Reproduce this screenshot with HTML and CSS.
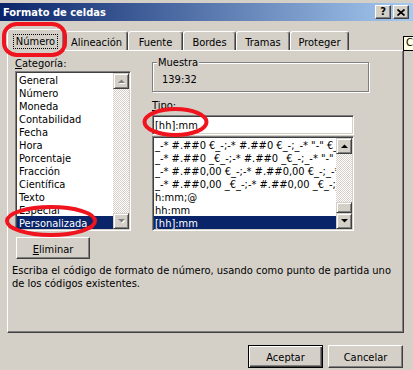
FILE: index.html
```html
<!DOCTYPE html>
<html lang="es">
<head>
<meta charset="utf-8">
<title>Formato de celdas</title>
<link rel="stylesheet" href="styles.css">
</head>
<body>
<div class="window">
  <header class="titlebar">
    <span class="title">Formato de celdas</span>
    <div class="caption-btns">
      <span class="cbtn help">?</span>
      <span class="cbtn close"><svg width="8" height="7" viewBox="0 0 8 7"><path d="M0.5 0.5 L7.5 6.5 M7.5 0.5 L0.5 6.5" stroke="#000" stroke-width="1.7" fill="none"/></svg></span>
    </div>
  </header>
  <nav class="tabs">
    <div class="tab active"><span class="focus">Número</span></div>
    <div class="tab t-alin">Alineación</div>
    <div class="tab t-fuen">Fuente</div>
    <div class="tab t-bord">Bordes</div>
    <div class="tab t-tram">Tramas</div>
    <div class="tab t-prot">Proteger</div>
  </nav>
  <section class="panel">
    <div class="cols">
      <div class="col-left">
        <div class="label"><u>C</u>ategoría:</div>
        <div class="listbox cat">
          <div class="rows">
            <div class="row">General</div>
            <div class="row">Número</div>
            <div class="row">Moneda</div>
            <div class="row">Contabilidad</div>
            <div class="row">Fecha</div>
            <div class="row">Hora</div>
            <div class="row">Porcentaje</div>
            <div class="row">Fracción</div>
            <div class="row">Científica</div>
            <div class="row">Texto</div>
            <div class="row">Especial</div>
            <div class="row sel">Personalizada</div>
          </div>
          <div class="vscroll">
            <div class="sbtn"><svg width="7" height="5" viewBox="0 0 7 5"><polygon points="1,5 8,5 4.5,1.5" fill="#fff"/><polygon points="0,4 7,4 3.5,0.5" fill="#808080"/></svg></div>
            <div class="track"></div>
            <div class="sbtn"><svg width="7" height="5" viewBox="0 0 7 5"><polygon points="1,1 8,1 4.5,4.5" fill="#fff"/><polygon points="0,0 7,0 3.5,3.5" fill="#808080"/></svg></div>
          </div>
        </div>
        <button class="btn elim"><u>E</u>liminar</button>
      </div>
      <div class="col-right">
        <fieldset class="group">
          <legend>Muestra</legend>
          <div class="sample">139:32</div>
        </fieldset>
        <div class="label tipo-label"><u>T</u>ipo:</div>
        <div class="textbox">[hh]:mm</div>
        <div class="listbox tipo">
          <div class="rows">
            <div class="row">_-* #.##0 €_-;-* #.##0 €_-;_-* "-" €_-;_-@_-</div>
            <div class="row">_-* #.##0 _€_-;-* #.##0 _€_-;_-* "-" _€_-;_-@_-</div>
            <div class="row">_-* #.##0,00 €_-;-* #.##0,00 €_-;_-* "-"?? €_-;_-@_-</div>
            <div class="row">_-* #.##0,00 _€_-;-* #.##0,00 _€_-;_-* "-"?? _€_-;_-@_-</div>
            <div class="row">h:mm;@</div>
            <div class="row">hh:mm</div>
            <div class="row sel">[hh]:mm</div>
          </div>
          <div class="vscroll">
            <div class="sbtn"><svg width="7" height="4" viewBox="0 0 7 4"><polygon points="0,4 7,4 3.5,0.5" fill="#000"/></svg></div>
            <div class="track"></div>
            <div class="sbtn thumb"></div>
            <div class="sbtn"><svg width="7" height="4" viewBox="0 0 7 4"><polygon points="0,0 7,0 3.5,3.5" fill="#000"/></svg></div>
          </div>
        </div>
      </div>
    </div>
    <p class="desc">Escriba el código de formato de número, usando como punto de partida uno<br>de los códigos existentes.</p>
  </section>
  <footer class="actions">
    <button class="btn default">Aceptar</button>
    <button class="btn">Cancelar</button>
  </footer>
</div>
<div class="tooltip">C</div>
<svg class="annotations" width="413" height="370" viewBox="0 0 413 370">
  <rect x="4" y="24" width="61" height="31" rx="13" ry="12" fill="none" stroke="#f0141e" stroke-width="4"/>
  <ellipse cx="175.5" cy="122" rx="31" ry="13" fill="none" stroke="#f0141e" stroke-width="4"/>
  <ellipse cx="51" cy="221" rx="44" ry="14" fill="none" stroke="#f0141e" stroke-width="4"/>
</svg>
</body>
</html>
```

FILE: styles.css
```css
* { box-sizing: border-box; }
html, body { margin: 0; padding: 0; }
body {
  width: 413px;
  height: 370px;
  overflow: hidden;
  position: relative;
  background: #d4d0c8;
  font-family: "DejaVu Sans Condensed", "Liberation Sans", sans-serif;
  font-size: 11px;
  line-height: 13px;
  color: #000;
}
.window { padding-top: 3px; }

.titlebar {
  height: 18px;
  display: flex;
  align-items: center;
  justify-content: space-between;
  padding: 0 4px 0 3px;
  background: linear-gradient(to right, #0a246a, #a6caf0);
  color: #fff;
  font-weight: bold;
}
.title { padding-top: 1px; }
.caption-btns { display: flex; gap: 2px; }
.cbtn {
  width: 16px;
  height: 14px;
  background: #d4d0c8;
  border: 1px solid;
  border-color: #fff #404040 #404040 #fff;
  box-shadow: inset -1px -1px #808080;
  display: flex;
  align-items: center;
  justify-content: center;
  color: #000;
  font-weight: bold;
  line-height: 12px;
}

.tabs {
  height: 29px;
  display: flex;
  align-items: flex-end;
  padding-left: 7px;
}
.tab {
  height: 19px;
  border: 1px solid;
  border-bottom: 0;
  border-color: #fff #404040 transparent #fff;
  border-radius: 3px 3px 0 0;
  box-shadow: inset -1px 0 #808080;
  text-align: center;
  padding-top: 4px;
  white-space: nowrap;
}
.tab.active {
  width: 57px;
  height: 23px;
  margin-bottom: -2px;
  position: relative;
  z-index: 1;
  background: #d4d0c8;
  padding-top: 4px;
}
.focus {
  display: inline-block;
  border: 1px dotted #000;
  padding: 0 2px;
}
.t-alin { width: 63px; margin-left: 1px; }
.t-fuen { width: 55px; }
.t-bord { width: 53px; }
.t-tram { width: 54px; }
.t-prot { width: 59px; }

.panel {
  margin-left: 7px;
  width: 397px;
  height: 283px;
  border: 1px solid;
  border-color: #fff #404040 #404040 #fff;
  box-shadow: inset -1px -1px #808080;
  padding: 6px 0 0 7px;
}
.cols { display: flex; }
.col-left { width: 116px; }
.col-right { margin-left: 21px; width: 217px; }
.label { height: 14px; }
.label u, .btn u { text-decoration: underline; text-underline-offset: 1px; }

.listbox {
  background: #fff;
  border: 1px solid;
  border-color: #808080 #fff #fff #808080;
  box-shadow: inset 1px 1px #404040, inset -1px -1px #d4d0c8;
  padding: 1px;
  display: flex;
}
.cat { width: 116px; height: 160px; }
.tipo { width: 202px; height: 95px; margin-top: 1px; }
.rows { flex: 1; min-width: 0; overflow: hidden; }
.row {
  height: 13px;
  line-height: 15px;
  padding-left: 2px;
  white-space: nowrap;
}
.tipo .row { padding-left: 1px; }
.row.sel { background: #0a246a; color: #fff; }

.vscroll { width: 16px; flex: none; display: flex; flex-direction: column; }
.sbtn {
  height: 16px;
  flex: none;
  background: #d4d0c8;
  border: 1px solid;
  border-color: #d4d0c8 #404040 #404040 #d4d0c8;
  box-shadow: inset 1px 1px #fff, inset -1px -1px #808080;
  display: flex;
  align-items: center;
  justify-content: center;
}
.sbtn svg { display: block; }
.thumb { height: 11px; }
.track {
  flex: 1;
  background: repeating-conic-gradient(#fff 0 25%, #d4d0c8 0 50%) 0 0 / 2px 2px;
}

.group {
  margin: -1px 0 0;
  width: 217px;
  padding: 4px 9px 5px;
  border: 1px solid #808080;
  box-shadow: 1px 1px 0 #fff, inset 1px 1px 0 #fff;
  min-inline-size: 0;
}
.group legend {
  margin-left: -5px;
  padding: 0 1px;
  background: #d4d0c8;
  line-height: 13px;
}
.sample { height: 13px; }
.tipo-label { margin-top: 7px; height: 16px; }
.textbox {
  width: 202px;
  height: 20px;
  background: #fff;
  border: 1px solid;
  border-color: #808080 #fff #fff #808080;
  box-shadow: inset 1px 1px #404040, inset -1px -1px #d4d0c8;
  padding: 3px 2px 0;
  white-space: nowrap;
}

.btn {
  font: inherit;
  color: #000;
  background: #d4d0c8;
  border: 1px solid;
  border-color: #fff #404040 #404040 #fff;
  box-shadow: inset -1px -1px #808080;
  padding: 1px 0 0;
  margin: 0;
  width: 75px;
  height: 23px;
}
.btn.default {
  border-color: #000;
  box-shadow: inset 1px 1px #fff, inset -1px -1px #404040, inset -2px -2px #808080;
}
.elim { display: block; width: 74px; height: 22px; margin: 6px 0 0 1px; padding-top: 2px; }

.desc { margin: 5px 0 0 -3px; white-space: nowrap; }

.actions {
  margin-top: 12px;
  display: flex;
  justify-content: flex-end;
  gap: 5px;
  padding-right: 10px;
}

.tooltip {
  position: absolute;
  left: 403px;
  top: 36px;
  width: 20px;
  height: 15px;
  border: 1px solid #000;
  background: #ffffe1;
  padding-left: 2px;
  line-height: 12px;
}
.annotations {
  position: absolute;
  left: 0;
  top: 0;
  pointer-events: none;
  z-index: 5;
}
```
